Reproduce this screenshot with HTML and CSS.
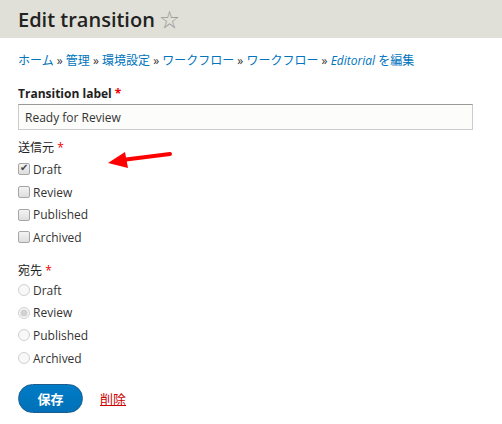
FILE: index.html
```html
<!DOCTYPE html>
<html lang="ja">
<head>
  <meta charset="UTF-8">
  <title>Edit transition</title>
  <link rel="stylesheet" href="styles.css">
</head>
<body>

  <header class="page-head">
    <h1>Edit transition <span class="star">&#9734;</span></h1>
  </header>

  <main class="content">
    <nav class="breadcrumb">
      <a href="#">ホーム</a> » <a href="#">管理</a> » <a href="#">環境設定</a> » <a href="#">ワークフロー</a> » <a href="#">ワークフロー</a> » <a href="#"><em>Editorial</em> を編集</a>
    </nav>

    <form class="edit-form">
      <div class="field">
        <label class="field-label" for="label">Transition label <span class="req">*</span></label>
        <input id="label" class="text-input" type="text" value="Ready for Review">
      </div>

      <fieldset class="options">
        <div class="field-label">送信元 <span class="req">*</span></div>
        <label class="option"><input type="checkbox" checked> Draft</label>
        <label class="option"><input type="checkbox"> Review</label>
        <label class="option"><input type="checkbox"> Published</label>
        <label class="option"><input type="checkbox"> Archived</label>

        <svg class="pointer" width="70" height="24" viewBox="0 0 70 24">
          <line x1="66" y1="3" x2="22" y2="8.5" stroke="#f00" stroke-width="4" stroke-linecap="round"/>
          <polygon points="4,12 21,1 24,17" fill="#f00"/>
        </svg>
      </fieldset>

      <fieldset class="options to">
        <div class="field-label">宛先 <span class="req">*</span></div>
        <label class="option"><input type="radio" name="to" disabled> Draft</label>
        <label class="option"><input type="radio" name="to" checked disabled> Review</label>
        <label class="option"><input type="radio" name="to" disabled> Published</label>
        <label class="option"><input type="radio" name="to" disabled> Archived</label>
      </fieldset>

      <div class="actions">
        <button type="button" class="btn-save">保存</button>
        <a href="#" class="delete">削除</a>
      </div>
    </form>
  </main>

</body>
</html>
```

FILE: styles.css
```css
body {
  margin: 0;
  font-family: "Open Sans", "Noto Sans CJK JP", sans-serif;
  font-size: 12px;
  color: #333;
  background: #fff;
}

.page-head {
  background: #e0e0d8;
  height: 38px;
  padding: 0 18px;
  box-sizing: border-box;
}

.page-head h1 {
  margin: 0;
  padding-top: 6px;
  font-size: 20px;
  font-weight: 600;
  color: #222;
  line-height: 28px;
}

.star {
  color: #999;
  font-weight: normal;
  font-size: 19px;
}

.content {
  padding: 14px 18px;
}

.breadcrumb {
  color: #333;
  font-size: 12px;
  line-height: 18px;
}

.breadcrumb a {
  color: #0074bd;
  text-decoration: none;
}

.edit-form {
  margin-top: 16px;
}

.field-label {
  display: block;
  font-weight: bold;
  font-size: 12px;
  line-height: 16px;
  color: #222;
}

.req {
  color: #e00;
}

.text-input {
  display: block;
  box-sizing: border-box;
  width: 455px;
  height: 26px;
  margin-top: 2px;
  padding: 3px 6px;
  border: 1px solid #ccc;
  border-top-color: #999;
  background: #fcfcfa;
  font: 12px "Open Sans", sans-serif;
  color: #333;
}

fieldset.options {
  position: relative;
  border: 0;
  padding: 0;
  margin: 9px 0 0;
}

fieldset.options .field-label {
  font-weight: normal;
  line-height: 18px;
  margin-bottom: 1px;
}

fieldset.to {
  margin-top: 13px;
}

fieldset.to .field-label {
  margin-bottom: -1px;
}

.option {
  display: flex;
  align-items: center;
  height: 22.7px;
  font-size: 12px;
}

.option input {
  margin: 0 3px 0 0;
  width: 12px;
  height: 12px;
}

.option input[type="checkbox"] {
  appearance: none;
  position: relative;
  box-sizing: border-box;
  border: 1px solid #a6a6a6;
  border-radius: 2px;
  background: linear-gradient(#f3f3f3, #dedede);
}

.option input[type="checkbox"]:checked::after {
  content: "\2714";
  position: absolute;
  left: 1px;
  top: -2px;
  font-size: 10px;
  line-height: 12px;
  color: #444;
}

.pointer {
  position: absolute;
  left: 86px;
  top: 12px;
}

.actions {
  display: flex;
  align-items: center;
  gap: 17px;
  margin-top: 14px;
}

.btn-save {
  width: 65px;
  height: 29px;
  border: 1px solid #1e5c90;
  border-radius: 15px;
  background: linear-gradient(#007bc6, #0071b8);
  color: #fff;
  font: bold 13px "Noto Sans CJK JP", sans-serif;
  cursor: pointer;
}

.delete {
  color: #c00;
  font-size: 13px;
}
```
